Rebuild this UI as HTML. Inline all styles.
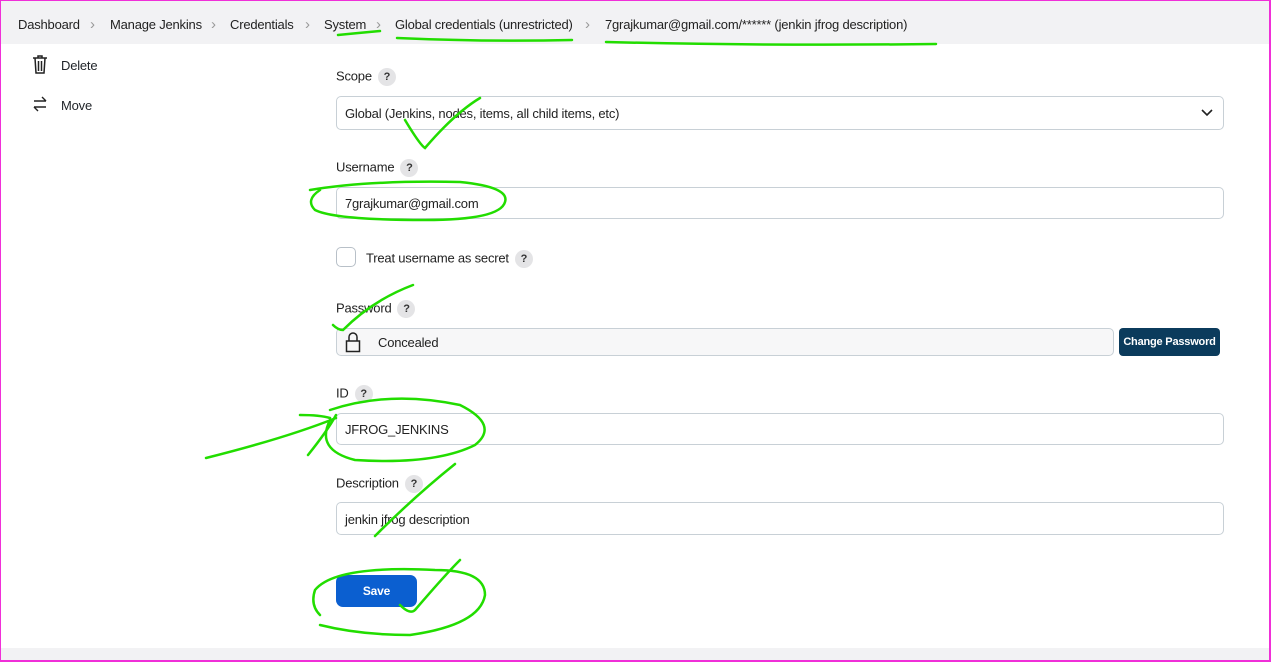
<!DOCTYPE html>
<html><head><meta charset="utf-8"><style>
*{margin:0;padding:0;box-sizing:border-box}
body{width:1271px;height:662px;position:relative;overflow:hidden;background:#fff;font-family:"Liberation Sans",sans-serif;color:#1f2328;font-size:13px;letter-spacing:-0.2px}
.frame{position:absolute;left:0;top:0;width:1271px;height:662px;border:1px solid #f02fd8;border-right-width:2px;border-bottom-width:2px;pointer-events:none;z-index:5}
.hdr{position:absolute;left:0;top:0;width:1271px;height:44px;background:#f2f2f4}
.bc{position:absolute;top:17px;font-size:13px;color:#222}
.sep{position:absolute;top:16px;color:#999;font-size:15px}
.foot{position:absolute;left:0;top:648px;width:1271px;height:14px;background:#f2f2f4}
.lbl{position:absolute;left:336px;font-size:13px;color:#222}
.q{display:inline-block;width:18px;height:18px;border-radius:9px;background:#e4e4e6;font-size:11px;font-weight:bold;text-align:center;line-height:18px;margin-left:6px;vertical-align:middle;color:#333}
.inp{position:absolute;left:336px;width:888px;border:1px solid #c8d0d6;border-radius:5px;background:#fff;font-size:13px;padding-left:8px;color:#222}
.side{position:absolute;left:61px;font-size:13px}
</style></head><body>
<div class="hdr"></div>
<span class="bc" style="left:18px">Dashboard</span><span class="sep" style="left:90px">&#x203A;</span>
<span class="bc" style="left:110px">Manage Jenkins</span><span class="sep" style="left:211px">&#x203A;</span>
<span class="bc" style="left:230px">Credentials</span><span class="sep" style="left:305px">&#x203A;</span>
<span class="bc" style="left:324px">System</span><span class="sep" style="left:376px">&#x203A;</span>
<span class="bc" style="left:395px">Global credentials (unrestricted)</span><span class="sep" style="left:585px">&#x203A;</span>
<span class="bc" style="left:605px">7grajkumar@gmail.com/****** (jenkin jfrog description)</span>

<svg style="position:absolute;left:32px;top:55px" width="16" height="20" viewBox="0 0 16 20" fill="none" stroke="#222" stroke-width="1.5"><path d="M1 3h14M6 3V1h4v2M3 3l1 15h8l1-15M6.5 6v10M9.5 6v10"/></svg>
<span class="side" style="top:58px">Delete</span>
<svg style="position:absolute;left:32px;top:96px" width="16" height="16" viewBox="0 0 16 16" fill="none" stroke="#222" stroke-width="1.4"><path d="M2 5h12M10 1l4 4M14 11H2M6 15l-4-4"/></svg>
<span class="side" style="top:98px">Move</span>

<div class="lbl" style="top:68px">Scope<span class="q">?</span></div>
<div class="inp" style="top:96px;height:34px;line-height:34px">Global (Jenkins, nodes, items, all child items, etc)
<svg style="position:absolute;right:10px;top:12px" width="12" height="8" viewBox="0 0 12 8" fill="none" stroke="#222" stroke-width="1.6"><path d="M1 1l5 5 5-5"/></svg></div>

<div class="lbl" style="top:159px">Username<span class="q">?</span></div>
<div class="inp" style="top:187px;height:32px;line-height:32px">7grajkumar@gmail.com</div>

<div style="position:absolute;left:336px;top:247px;width:20px;height:20px;border:1.5px solid #b8c0c8;border-radius:5px"></div>
<div class="lbl" style="left:366px;top:250px">Treat username as secret<span class="q">?</span></div>

<div class="lbl" style="top:300px">Password<span class="q">?</span></div>
<div class="inp" style="top:328px;height:28px;width:778px;background:#f7f7f8;padding-left:41px;line-height:27px">Concealed</div>
<svg style="position:absolute;left:345px;top:332px" width="16" height="21" viewBox="0 0 16 21" fill="none" stroke="#222" stroke-width="1.5"><path d="M4 9V5a4 4 0 0 1 8 0v4M1.5 9h13v10.5h-13z"/></svg>
<div style="position:absolute;left:1119px;top:328px;width:101px;height:28px;background:#0b3b5c;border-radius:4px;color:#fff;font-size:11px;font-weight:bold;text-align:center;line-height:28px">Change Password</div>

<div class="lbl" style="top:385px">ID<span class="q">?</span></div>
<div class="inp" style="top:413px;height:32px;line-height:32px">JFROG_JENKINS</div>

<div class="lbl" style="top:475px">Description<span class="q">?</span></div>
<div class="inp" style="top:502px;height:33px;line-height:33px">jenkin jfrog description</div>

<div style="position:absolute;left:336px;top:575px;width:81px;height:32px;background:#0b5fd0;border-radius:7px;color:#fff;font-weight:bold;font-size:12px;text-align:center;line-height:32px">Save</div>

<div class="foot"></div>

<svg style="position:absolute;left:0;top:0;z-index:4" width="1271" height="662" fill="none" stroke="#22dd00" stroke-width="2.5" stroke-linecap="round">
<path d="M338 35q20 -2 42 -4"/>
<path d="M397 38q90 4 175 2"/>
<path d="M606 42q160 4 330 2"/>
<path d="M405 120q15 25 20 28q30 -35 55 -50"/>
<path d="M310 190q60 -10 150 -8q50 5 45 20q-5 18 -80 18q-90 0 -110 -10q-10 -10 5 -20"/>
<path d="M333 325q5 5 10 5q30 -30 70 -45"/>
<path d="M206 458q80 -20 130 -40M300 415q20 0 30 3M308 455q20 -25 28 -40"/>
<path d="M330 410q60 -20 130 -5q40 20 15 40q-40 20 -120 15q-40 -10 -25 -40"/>
<path d="M375 536q40 -40 80 -72"/>
<path d="M320 625q40 10 90 10q70 -10 75 -40q0 -25 -50 -25q-100 -5 -120 20q-5 15 5 25M400 605q10 10 15 5q30 -35 45 -50"/>
</svg>
<div class="frame"></div>
</body></html>
